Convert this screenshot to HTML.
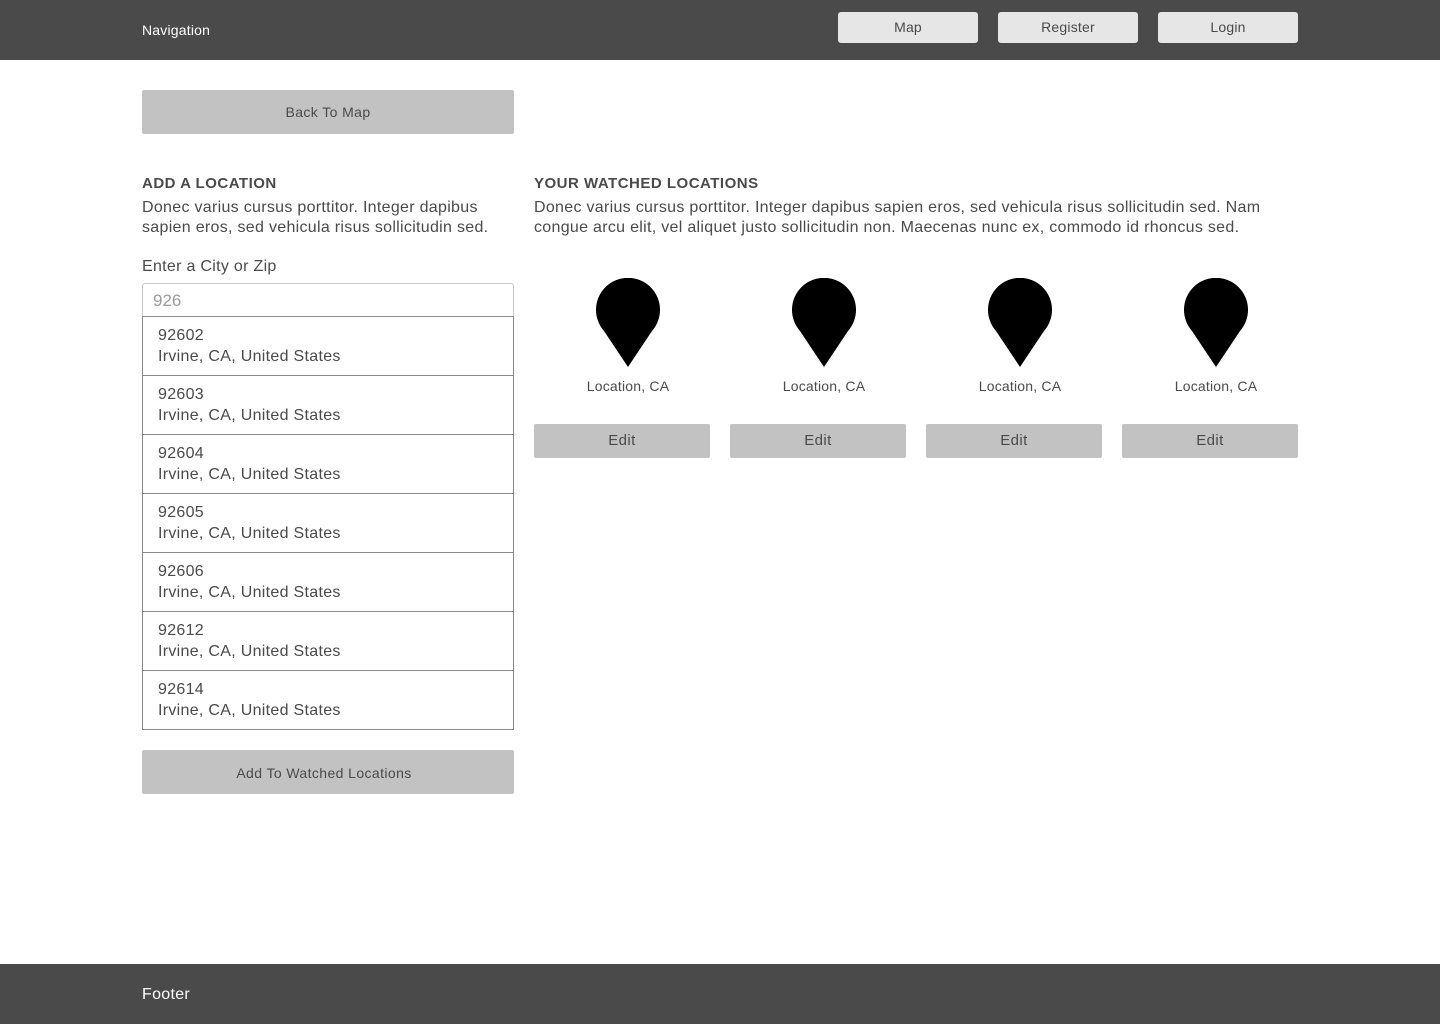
<!DOCTYPE html>
<html><head><style>
*{margin:0;padding:0;box-sizing:border-box}
body{width:1440px;height:1024px;position:relative;background:#fff;font-family:"Liberation Sans",sans-serif;color:#4a4a4a;overflow:hidden}
.a{position:absolute}
.nav{left:0;top:0;width:1440px;height:60px;background:#4a4a4a}
.nb{top:12px;width:140px;height:31px;background:#e6e6e6;border-radius:3px;text-align:center;line-height:31px;font-size:14px;color:#4a4a4a;letter-spacing:.2px}
.btn{background:#c2c2c2;border-radius:2px;text-align:center;font-size:14px;color:#4a4a4a;letter-spacing:.4px}
.h{font-weight:bold;font-size:15px;letter-spacing:.5px}
.p{font-size:16px;line-height:20px;letter-spacing:.3px}
.row{left:142px;width:372px;height:60px;border:1px solid #8a8a8a;padding:8px 15px;font-size:16px;line-height:21px;letter-spacing:.3px}
.pin{top:278px;width:64px;height:90px}
.lab{top:378px;width:176px;text-align:center;font-size:14px;letter-spacing:.2px}
.edit{top:424px;width:176px;height:34px;line-height:34px;font-size:15px}
</style></head><body>
<div class="a nav"></div>
<div class="a" style="left:142px;top:22px;color:#fff;font-size:14px;letter-spacing:.2px">Navigation</div>
<div class="a nb" style="left:838px">Map</div>
<div class="a nb" style="left:998px">Register</div>
<div class="a nb" style="left:1158px">Login</div>

<div class="a btn" style="left:142px;top:90px;width:372px;height:44px;line-height:44px">Back To Map</div>

<div class="a h" style="left:142px;top:175px">ADD A LOCATION</div>
<div class="a p" style="left:142px;top:198px;width:370px">Donec varius cursus porttitor. Integer dapibus sapien eros, sed vehicula risus sollicitudin sed.</div>
<div class="a" style="left:142px;top:258px;font-size:16px;letter-spacing:.3px">Enter a City or Zip</div>
<div class="a" style="left:142px;top:283px;width:372px;height:34px;border:1px solid #c8c8c8;border-radius:3px 3px 0 0;padding-left:10px;line-height:33px;font-size:17px;color:#9b9b9b">926</div>
<div class="a row" style="top:316px">92602<br>Irvine, CA, United States</div>
<div class="a row" style="top:375px">92603<br>Irvine, CA, United States</div>
<div class="a row" style="top:434px">92604<br>Irvine, CA, United States</div>
<div class="a row" style="top:493px">92605<br>Irvine, CA, United States</div>
<div class="a row" style="top:552px">92606<br>Irvine, CA, United States</div>
<div class="a row" style="top:611px">92612<br>Irvine, CA, United States</div>
<div class="a row" style="top:670px">92614<br>Irvine, CA, United States</div>
<div class="a btn" style="left:142px;top:750px;width:372px;height:44px;line-height:46px;padding-right:8px">Add To Watched Locations</div>

<div class="a h" style="left:534px;top:175px">YOUR WATCHED LOCATIONS</div>
<div class="a p" style="left:534px;top:198px;width:760px">Donec varius cursus porttitor. Integer dapibus sapien eros, sed vehicula risus sollicitudin sed. Nam<br>congue arcu elit, vel aliquet justo sollicitudin non. Maecenas nunc ex, commodo id rhoncus sed.</div>

<svg class="a pin" style="left:596px" viewBox="0 0 64 90"><path d="M32 89 L8 53 A32 32 0 1 1 56 53 Z" fill="#000"/></svg>
<svg class="a pin" style="left:792px" viewBox="0 0 64 90"><path d="M32 89 L8 53 A32 32 0 1 1 56 53 Z" fill="#000"/></svg>
<svg class="a pin" style="left:988px" viewBox="0 0 64 90"><path d="M32 89 L8 53 A32 32 0 1 1 56 53 Z" fill="#000"/></svg>
<svg class="a pin" style="left:1184px" viewBox="0 0 64 90"><path d="M32 89 L8 53 A32 32 0 1 1 56 53 Z" fill="#000"/></svg>
<div class="a lab" style="left:540px">Location, CA</div>
<div class="a lab" style="left:736px">Location, CA</div>
<div class="a lab" style="left:932px">Location, CA</div>
<div class="a lab" style="left:1128px">Location, CA</div>
<div class="a btn edit" style="left:534px">Edit</div>
<div class="a btn edit" style="left:730px">Edit</div>
<div class="a btn edit" style="left:926px">Edit</div>
<div class="a btn edit" style="left:1122px">Edit</div>

<div class="a" style="left:0;top:964px;width:1440px;height:60px;background:#4a4a4a"></div>
<div class="a" style="left:142px;top:986px;color:#fff;font-size:16px;letter-spacing:.3px">Footer</div>
</body></html>
